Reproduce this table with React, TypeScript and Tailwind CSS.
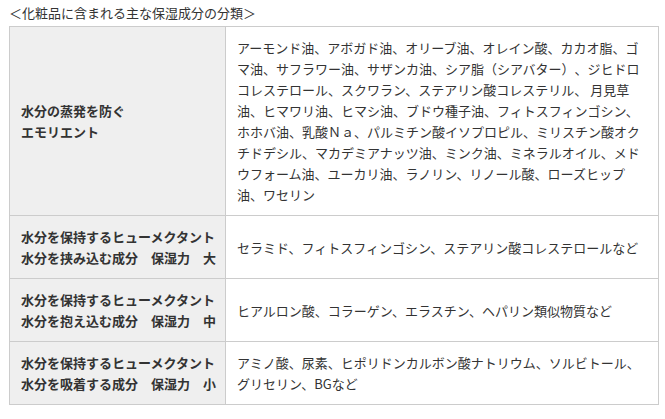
const rows = [
  {
    head: ['水分の蒸発を防ぐ', 'エモリエント'],
    body: 'アーモンド油、アボガド油、オリーブ油、オレイン酸、カカオ脂、ゴマ油、サフラワー油、サザンカ油、シア脂（シアバター）、ジヒドロコレステロール、スクワラン、ステアリン酸コレステリル、 月見草油、ヒマワリ油、ヒマシ油、ブドウ種子油、フィトスフィンゴシン、ホホバ油、乳酸Ｎａ、パルミチン酸イソプロピル、ミリスチン酸オクチドデシル、マカデミアナッツ油、ミンク油、ミネラルオイル、メドウフォーム油、ユーカリ油、ラノリン、リノール酸、ローズヒップ油、ワセリン',
  },
  {
    head: ['水分を保持するヒューメクタント', '水分を挟み込む成分　保湿力　大'],
    body: 'セラミド、フィトスフィンゴシン、ステアリン酸コレステロールなど',
  },
  {
    head: ['水分を保持するヒューメクタント', '水分を抱え込む成分　保湿力　中'],
    body: 'ヒアルロン酸、コラーゲン、エラスチン、ヘパリン類似物質など',
  },
  {
    head: ['水分を保持するヒューメクタント', '水分を吸着する成分　保湿力　小'],
    body: 'アミノ酸、尿素、ヒポリドンカルボン酸ナトリウム、ソルビトール、グリセリン、BGなど',
  },
];

export default function App() {
  return (
    <div className="w-[665px] h-[419px] bg-white pl-[9px] pt-[2px] text-[13px] leading-[21px] text-[#333] font-['Noto_Sans_CJK_JP',sans-serif] [text-spacing-trim:space-all]">
      <div className="mb-[3px]">＜化粧品に含まれる主な保湿成分の分類＞</div>
      <table className="w-[650px] table-fixed border-collapse">
        <colgroup>
          <col className="w-[216px]" />
          <col />
        </colgroup>
        <tbody>
          {rows.map(row => (
            <tr key={row.head.join('')}>
              <td className="border border-[#cccccc] bg-[#efefef] pl-[11px] pr-[4px] py-[10px] align-middle font-bold whitespace-nowrap">
                {row.head.map(line => (
                  <div key={line}>{line}</div>
                ))}
              </td>
              <td className="border border-[#cccccc] bg-white px-[11px] py-[10px] align-middle">{row.body}</td>
            </tr>
          ))}
        </tbody>
      </table>
    </div>
  );
}
